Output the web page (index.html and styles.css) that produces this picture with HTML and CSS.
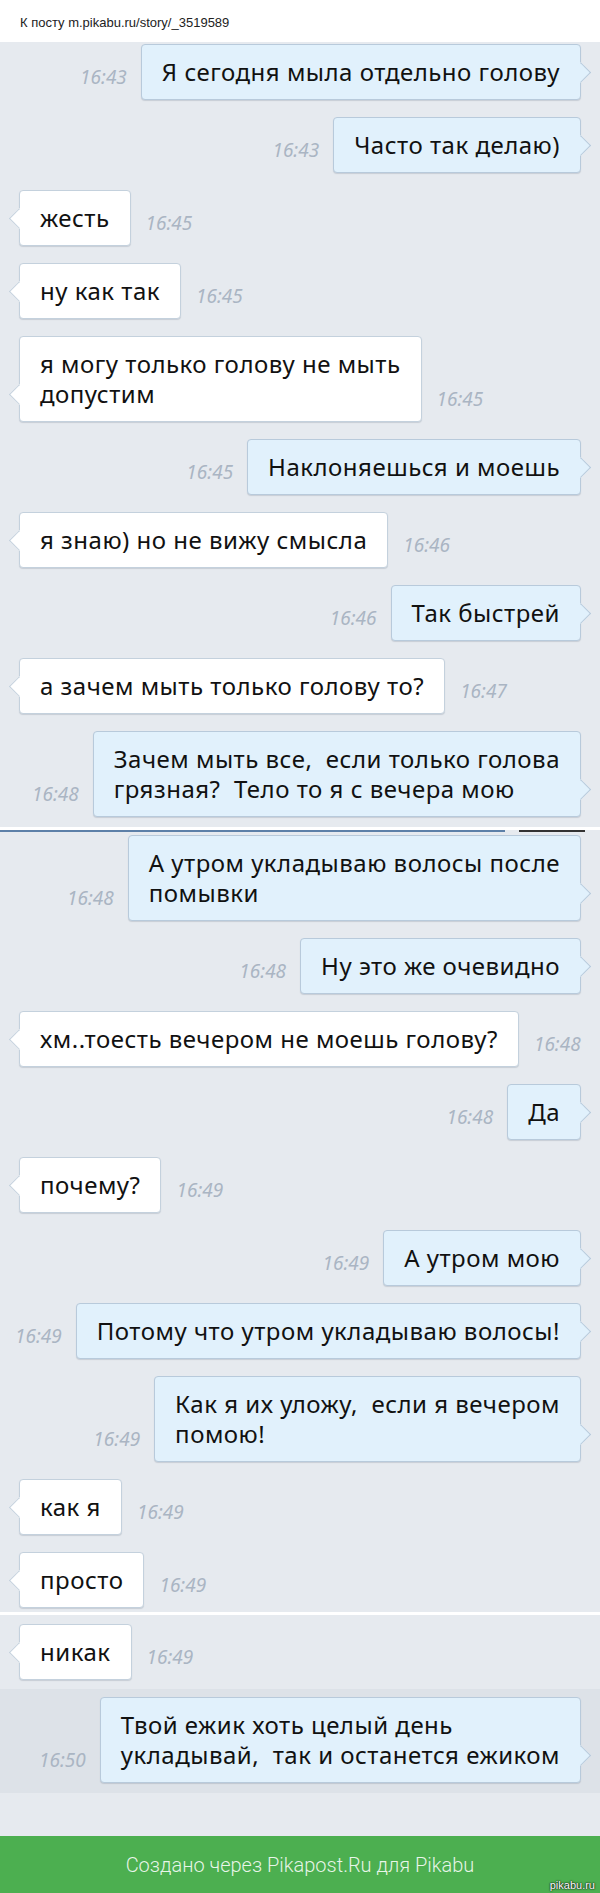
FILE: index.html
```html
<!DOCTYPE html>
<html lang="ru">
<head>
  <meta charset="UTF-8" />
  <meta name="viewport" content="width=device-width, initial-scale=1" />
  <title>К посту m.pikabu.ru/story/_3519589</title>
  <link rel="stylesheet" href="styles.css">
</head>
<body>

<div class="top">К посту m.pikabu.ru/story/_3519589</div>

<div class="chat">
  <div class="part first">
    <div class="msg out"><span class="time">16:43</span><div class="bubble">Я сегодня мыла отдельно голову</div></div>
    <div class="msg out"><span class="time">16:43</span><div class="bubble">Часто так делаю)</div></div>
    <div class="msg in"><div class="bubble">жесть</div><span class="time">16:45</span></div>
    <div class="msg in"><div class="bubble">ну как так</div><span class="time">16:45</span></div>
    <div class="msg in"><div class="bubble">я могу только голову не мыть<br>допустим</div><span class="time">16:45</span></div>
    <div class="msg out"><span class="time">16:45</span><div class="bubble">Наклоняешься и моешь</div></div>
    <div class="msg in"><div class="bubble">я знаю) но не вижу смысла</div><span class="time">16:46</span></div>
    <div class="msg out"><span class="time">16:46</span><div class="bubble">Так быстрей</div></div>
    <div class="msg in"><div class="bubble">а зачем мыть только голову то?</div><span class="time">16:47</span></div>
    <div class="msg out"><span class="time">16:48</span><div class="bubble">Зачем мыть все,&nbsp; если только голова<br>грязная?&nbsp; Тело то я с вечера мою</div></div>
  </div>

  <div class="cut">
    <div class="cut-white"></div>
    <div class="cut-bar"><span class="cut-blue"></span><span class="cut-dark"></span></div>
  </div>

  <div class="part second">
    <div class="msg out"><span class="time">16:48</span><div class="bubble">А утром укладываю волосы после<br>помывки</div></div>
    <div class="msg out"><span class="time">16:48</span><div class="bubble">Ну это же очевидно</div></div>
    <div class="msg in"><div class="bubble">хм..тоесть вечером не моешь голову?</div><span class="time">16:48</span></div>
    <div class="msg out"><span class="time">16:48</span><div class="bubble">Да</div></div>
    <div class="msg in"><div class="bubble">почему?</div><span class="time">16:49</span></div>
    <div class="msg out"><span class="time">16:49</span><div class="bubble">А утром мою</div></div>
    <div class="msg out"><span class="time">16:49</span><div class="bubble">Потому что утром укладываю волосы!</div></div>
    <div class="msg out"><span class="time">16:49</span><div class="bubble">Как я их уложу,&nbsp; если я вечером<br>помою!</div></div>
    <div class="msg in"><div class="bubble">как я</div><span class="time">16:49</span></div>
    <div class="msg in"><div class="bubble">просто</div><span class="time">16:49</span></div>
  </div>

  <div class="cut-line"></div>

  <div class="part third">
    <div class="msg in"><div class="bubble">никак</div><span class="time">16:49</span></div>
  </div>

  <div class="part marked">
    <div class="msg out"><span class="time">16:50</span><div class="bubble">Твой ежик хоть целый день<br>укладывай,&nbsp; так и останется ежиком</div></div>
  </div>
</div>

<div class="footer">
  Создано через Pikapost.Ru для Pikabu
  <span class="mark">pikabu.ru</span>
</div>

</body>
</html>
```

FILE: styles.css
```css
body {
  margin: 0;
  background: #e6eaef;
  font-family: "Noto Sans", sans-serif;
  color: #111;
}
.top {
  height: 42px;
  background: #fff;
  padding-left: 20px;
  font-family: "Liberation Sans", Arial, sans-serif;
  font-size: 13px;
  line-height: 46px;
  color: #222;
  box-sizing: border-box;
}
.chat {
  display: flex;
  flex-direction: column;
}
.part {
  display: flex;
  flex-direction: column;
  gap: 17px;
}
.first {
  padding-top: 2px;
}
.second {
  padding-top: 3px;
}
.third {
  padding-top: 9px;
}
.marked {
  margin-top: 9px;
  padding: 8px 0 10px;
  background: #dde2e8;
}
.msg {
  display: flex;
  align-items: flex-end;
}
.msg.out {
  justify-content: flex-end;
  padding-right: 19px;
  gap: 14px;
}
.msg.in {
  padding-left: 19px;
  gap: 15px;
}
.bubble {
  position: relative;
  padding: 12px 20px;
  font-size: 24px;
  letter-spacing: 0.5px;
  line-height: 30px;
  white-space: nowrap;
  border: 1px solid #c4d1dd;
  border-radius: 4px;
  box-shadow: 0 1px 1px rgba(60, 80, 100, 0.18);
}
.out .bubble {
  background: #e1f1fc;
  border-color: #b8cadb;
}
.in .bubble {
  background: #fff;
}
.bubble::after {
  content: "";
  position: absolute;
  bottom: 19px;
  width: 13px;
  height: 13px;
  background: inherit;
  border: 1px solid #b8cadb;
  transform: rotate(45deg);
}
.out .bubble::after {
  right: -8px;
  border-left-color: transparent;
  border-bottom-color: transparent;
}
.in .bubble::after {
  left: -8px;
  border-color: #c4d1dd;
  border-top-color: transparent;
  border-right-color: transparent;
}
.time {
  font-size: 19px;
  font-style: italic;
  line-height: 22px;
  color: #aab5c3;
  margin-bottom: 12px;
}
.cut {
  margin-top: 10px;
}
.cut-white {
  height: 3px;
  background: #fff;
}
.cut-bar {
  display: flex;
  height: 2px;
}
.cut-blue {
  width: 505px;
  background: #5d80a8;
}
.cut-dark {
  width: 66px;
  margin-left: 14px;
  background: #333;
}
.cut-line {
  margin-top: 4px;
  height: 3px;
  background: #fff;
}
.footer {
  position: relative;
  margin-top: 43px;
  height: 58px;
  background: #4caf50;
  color: rgba(255, 255, 255, 0.88);
  font-family: Roboto, sans-serif;
  font-weight: 300;
  font-size: 20px;
  line-height: 58px;
  text-align: center;
}
.mark {
  position: absolute;
  right: 5px;
  bottom: 3px;
  font-family: "Liberation Sans", Arial, sans-serif;
  font-size: 11px;
  font-weight: normal;
  line-height: 12px;
  color: #fff;
  text-shadow: 0 0 2px #000, 0 0 1px #000;
}
```
